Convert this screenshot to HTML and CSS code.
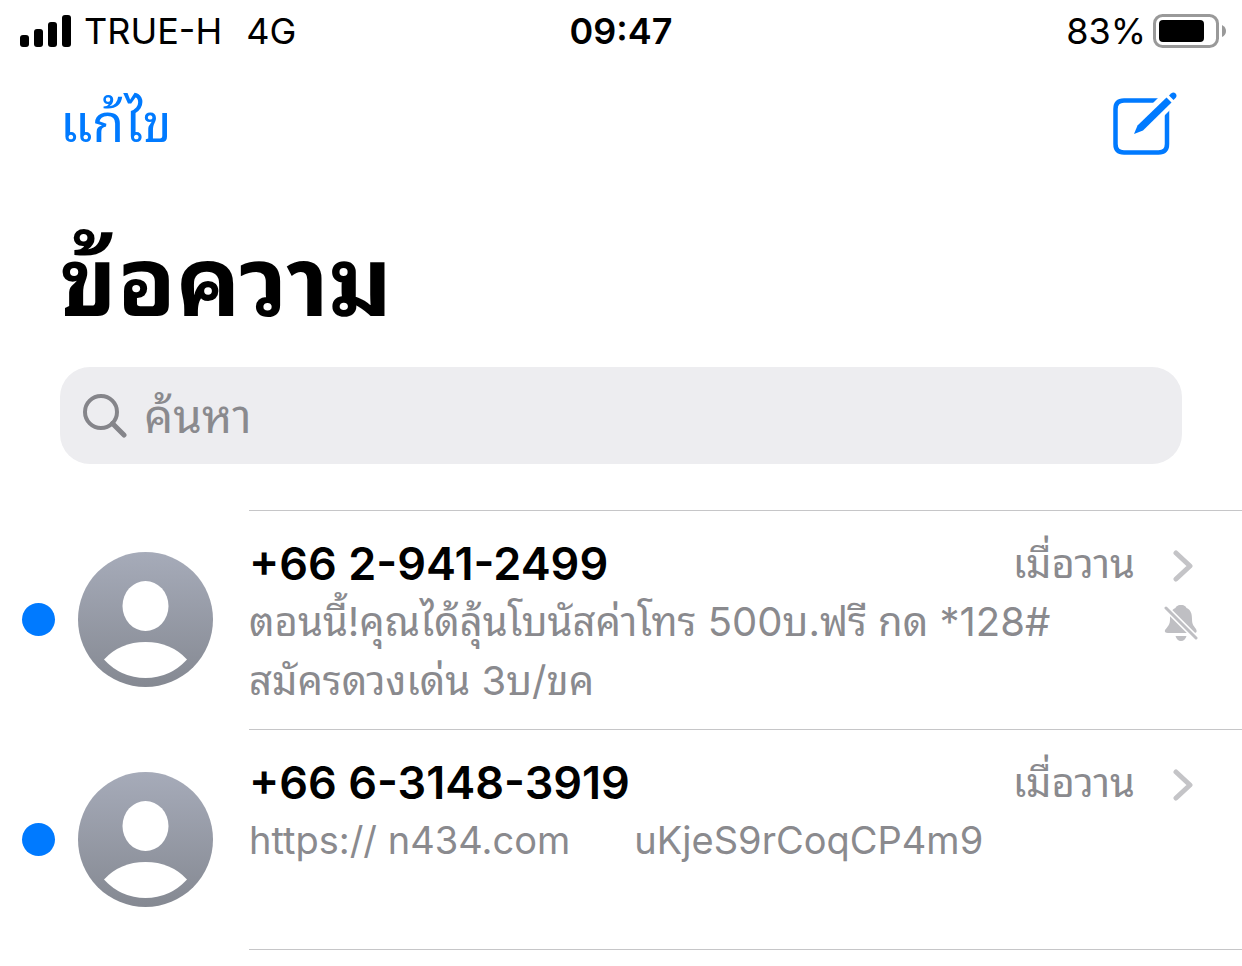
FILE: index.html
```html
<!DOCTYPE html>
<html lang="th">
<head>
    <meta charset="UTF-8">
    <meta name="viewport" content="width=device-width, initial-scale=1.0">
    <title>ข้อความ</title>
    <link rel="stylesheet" href="styles.css">
</head>
<body>

<div class="status-bar">
    <div class="status-left">
        <svg class="signal" viewBox="0 0 52 32" aria-hidden="true">
            <rect x="0" y="20" width="9" height="12" rx="3"/>
            <rect x="14" y="14" width="9" height="18" rx="3"/>
            <rect x="28" y="7" width="9" height="25" rx="3"/>
            <rect x="42" y="0" width="9" height="32" rx="3"/>
        </svg>
        <span>TRUE-H</span>
        <span class="network">4G</span>
    </div>
    <div class="clock">09:47</div>
    <div class="status-right">
        <span>83%</span>
        <svg class="battery" viewBox="0 0 74 34" aria-hidden="true">
            <rect x="2.500" y="1.500" width="63" height="31" rx="8" fill="none" stroke="#999" stroke-width="3"/>
            <rect x="7" y="6" width="45" height="22" rx="4"/>
            <path d="M70 11 Q74 13 74 17 Q74 21 70 23 Z" fill="#999"/>
        </svg>
    </div>
</div>

<header>
    <div class="toolbar">
        <button class="edit">แก้ไข</button>
        <button class="compose" aria-label="เขียนข้อความ">
            <svg viewBox="0 0 64 64" aria-hidden="true">
                <path d="M45 8.500H11Q2.500 8.500 2.500 17V52Q2.500 60.500 11 60.500H45.500Q54 60.500 54 52V15" fill="none" stroke="#007aff" stroke-width="4.500"/>
                <path d="M36 15 L47 4 L60 15 L49 26 Z" fill="#fff"/>
                <path d="M53.500 5.500 L58.500 10.500 L30 38.500 L21 42 L24.500 33.500 Z" fill="#007aff"/>
                <path d="M56 3.500 L58 1.500 Q60.500 -0.500 62.500 1.500 Q64.500 3.500 62.500 6 L60.500 8 Z" fill="#007aff"/>
            </svg>
        </button>
    </div>
    <h1>ข้อความ</h1>
    <label class="search-box">
        <svg viewBox="0 0 44 44" aria-hidden="true">
            <circle cx="18" cy="18" r="16" fill="none" stroke="#85858a" stroke-width="4"/>
            <path d="M29.500 29.500 L41 41" stroke="#85858a" stroke-width="5" stroke-linecap="round"/>
        </svg>
        <input type="text" placeholder="ค้นหา" aria-label="ค้นหา">
    </label>
</header>

<svg class="defs" width="0" height="0" aria-hidden="true">
    <defs>
        <linearGradient id="avatarFill" x1="0" y1="0" x2="0" y2="1">
            <stop offset="0" stop-color="#a6abb9"/>
            <stop offset="1" stop-color="#858992"/>
        </linearGradient>
        <symbol id="avatar" viewBox="0 0 135 135">
            <circle cx="67.500" cy="67.500" r="67.500" fill="url(#avatarFill)"/>
            <ellipse cx="67.500" cy="54" rx="23" ry="25" fill="#fff"/>
            <path d="M26 107.500 Q42 90 67.500 90 Q93 90 109 107.500 Q92 126 67.500 126 Q43 126 26 107.500 Z" fill="#fff"/>
        </symbol>
        <symbol id="chevron" viewBox="0 0 20 32">
            <path d="M3 3 L17 16 L3 29" fill="none" stroke="#c4c4c7" stroke-width="5" stroke-linecap="round" stroke-linejoin="round"/>
        </symbol>
    </defs>
</svg>

<main>
    <article class="conversation">
        <span class="unread"></span>
        <svg class="avatar" aria-hidden="true"><use href="#avatar"/></svg>
        <div class="content">
            <div class="top">
                <h2>+66 2-941-2499</h2>
                <time>เมื่อวาน</time>
                <svg class="chevron" aria-hidden="true"><use href="#chevron"/></svg>
            </div>
            <div class="bottom">
                <p>ตอนนี้!คุณได้ลุ้นโบนัสค่าโทร 500บ.ฟรี กด *128# สมัครดวงเด่น 3บ/ขค</p>
                <svg class="muted" viewBox="0 0 34 36" aria-hidden="true">
                    <path d="M17 0 C21 0 22 2 22.500 3 C27 5 28 9 28 14 C28 20 30 21 32 24 Q34 28 30 28 H4 Q0 28 1 25 C4 21 6 20 6 14 C6 9 7 5 11.500 3 C12 2 13 0 17 0 Z M11.500 31 H22.500 Q21 36 17 36 Q13 36 11.500 31 Z" fill="#bfbfc3"/>
                    <path d="M-1 0 L34 35" stroke="#fff" stroke-width="6"/>
                    <path d="M2 3 L32 33" stroke="#bfbfc3" stroke-width="3" stroke-linecap="round"/>
                </svg>
            </div>
        </div>
    </article>
    <article class="conversation">
        <span class="unread"></span>
        <svg class="avatar" aria-hidden="true"><use href="#avatar"/></svg>
        <div class="content">
            <div class="top">
                <h2>+66 6-3148-3919</h2>
                <time>เมื่อวาน</time>
                <svg class="chevron" aria-hidden="true"><use href="#chevron"/></svg>
            </div>
            <div class="bottom">
                <p class="latin">https:// n434.com      uKjeS9rCoqCP4m9</p>
            </div>
        </div>
    </article>
</main>

</body>
</html>
```

FILE: styles.css
```css
* {
    box-sizing: border-box;
}

body {
    font-family: Inter, Thonburi, "Noto Sans Thai Looped", Loma, "Noto Sans Thai", sans-serif;
    margin: 0;
    background-color: #fff;
    color: #000;
}

button {
    padding: 0;
    border: none;
    background: none;
    font-family: inherit;
    color: #007aff;
    cursor: pointer;
}

svg {
    display: block;
    flex: none;
}

.status-bar {
    display: grid;
    grid-template-columns: 1fr auto 1fr;
    align-items: center;
    height: 62px;
    padding: 0 16px;
    font-size: 36px;
}

.status-left,
.status-right {
    display: flex;
    align-items: center;
}

.status-left {
    gap: 12px;
    padding-left: 4px;
}

.status-right {
    justify-content: flex-end;
    gap: 6px;
}

.signal {
    width: 52px;
    height: 32px;
}

.network {
    margin-left: 12px;
}

.clock {
    font-weight: 600;
}

.battery {
    width: 74px;
    height: 34px;
}

header {
    padding: 0 60px;
}

.toolbar {
    display: flex;
    justify-content: space-between;
    align-items: center;
    height: 124px;
}

.edit {
    font-size: 52px;
    line-height: 72px;
}

.compose svg {
    width: 64px;
    height: 64px;
    margin-right: 5px;
}

h1 {
    margin: 35px 0 26px;
    font-size: 96px;
    line-height: 120px;
    font-weight: 700;
}

.search-box {
    display: flex;
    align-items: center;
    gap: 17px;
    height: 97px;
    padding: 0 23px;
    background-color: #ededf0;
    border-radius: 30px;
}

.search-box svg {
    width: 44px;
    height: 44px;
}

.search-box input {
    flex: 1;
    min-width: 0;
    height: 97px;
    padding: 0;
    border: none;
    outline: none;
    background: none;
    font-family: inherit;
    font-size: 46px;
}

.search-box input::placeholder {
    color: #8a8a8e;
    opacity: 1;
}

.defs {
    position: absolute;
}

main {
    margin-top: 46px;
}

.conversation {
    display: flex;
    align-items: center;
    padding-left: 22px;
}

.unread {
    flex: none;
    width: 33px;
    height: 33px;
    border-radius: 50%;
    background-color: #007aff;
}

.avatar {
    width: 135px;
    height: 135px;
    margin: 0 36px 0 23px;
}

.content {
    flex: 1;
    min-width: 0;
    min-height: 219px;
    padding: 25px 44px 0 0;
    border-top: 1px solid #c6c6c8;
}

.conversation:last-child .content {
    min-height: 221px;
    border-bottom: 1px solid #c6c6c8;
}

.top {
    display: flex;
    align-items: center;
}

h2 {
    flex: 1;
    margin: 0;
    font-size: 45px;
    line-height: 56px;
    font-weight: 600;
}

time {
    font-size: 40px;
    line-height: 56px;
    color: #8a8a8e;
}

.chevron {
    width: 20px;
    height: 32px;
    margin: 4px 5px 0 38px;
}

.bottom {
    display: flex;
    align-items: flex-start;
    justify-content: space-between;
}

p {
    max-width: 860px;
    margin: 0;
    font-size: 40px;
    line-height: 59px;
    color: #8a8a8e;
    white-space: pre-wrap;
}

.latin {
    font-size: 38px;
}

.muted {
    width: 34px;
    height: 36px;
    margin-top: 13px;
}
```
